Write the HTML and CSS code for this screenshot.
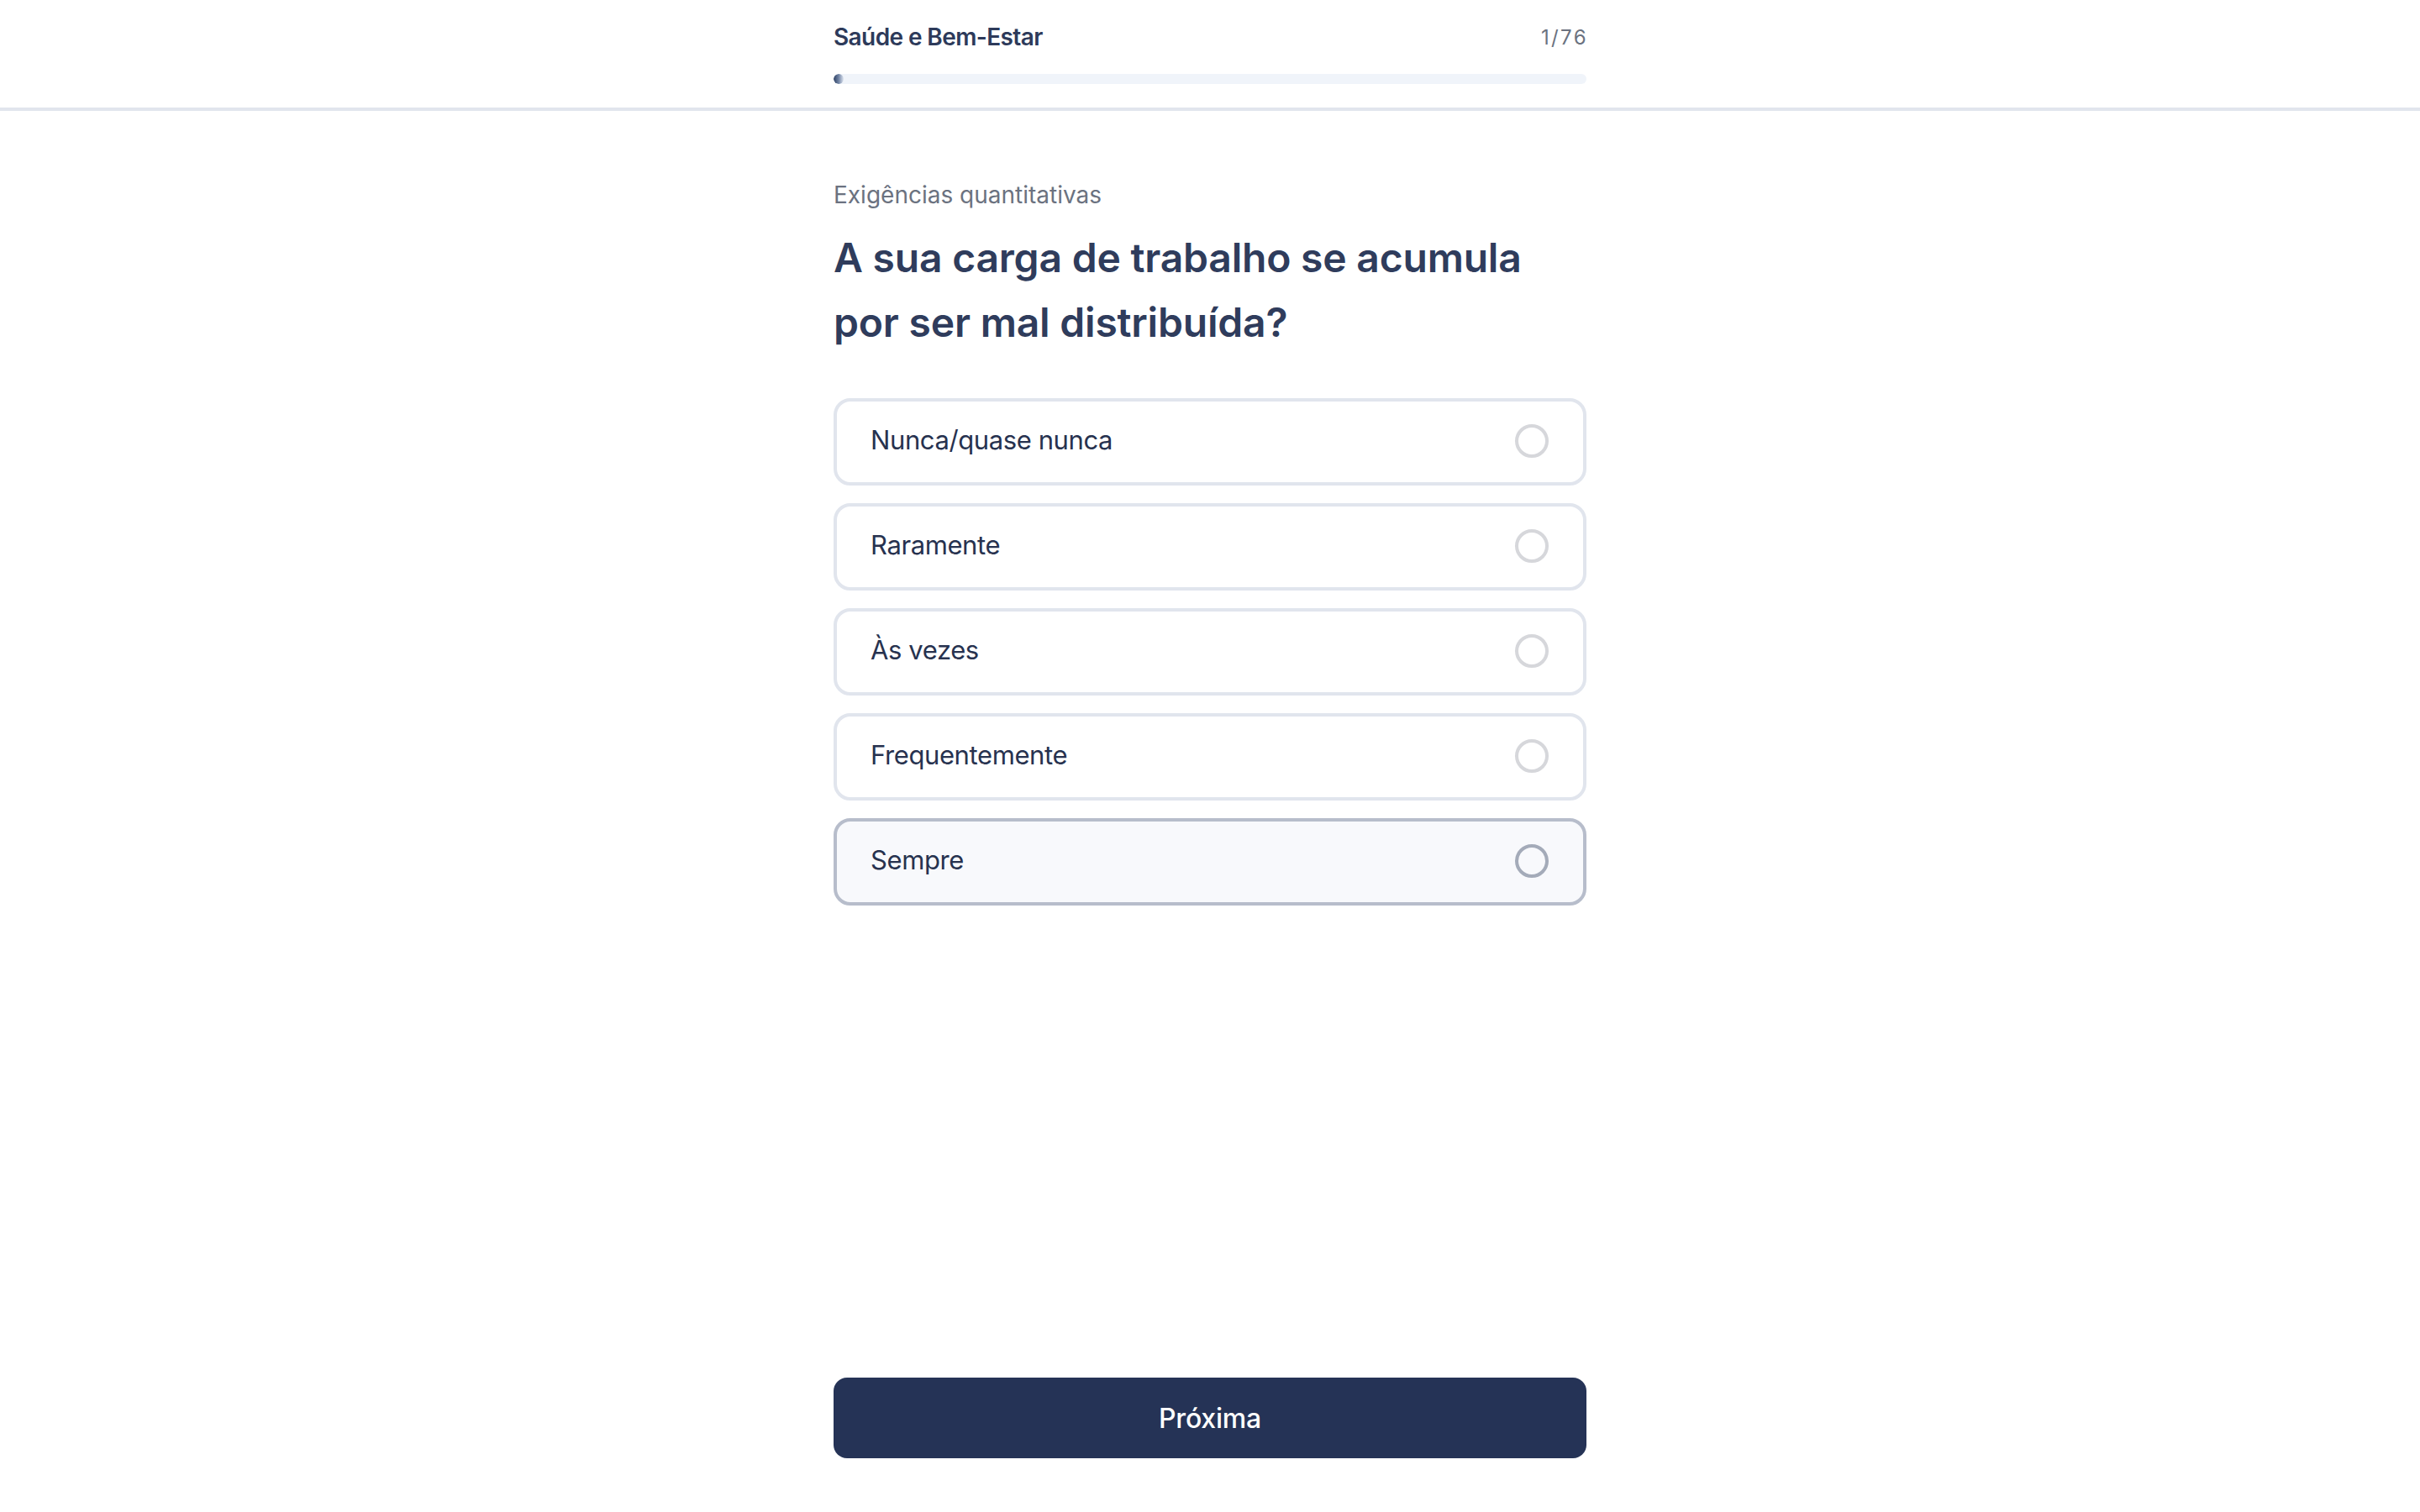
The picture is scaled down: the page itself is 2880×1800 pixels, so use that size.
FILE: index.html
```html
<!DOCTYPE html>
<html lang="pt-BR">
<head>
<meta charset="utf-8">
<title>Saúde e Bem-Estar</title>
<link rel="stylesheet" href="styles.css">
</head>
<body>
<header class="topbar">
  <div class="wrap">
    <div class="topbar-row">
      <span class="survey-title">Saúde e Bem-Estar</span>
      <span class="counter">1/76</span>
    </div>
    <div class="progress"><div class="progress-fill" style="width:1.32%"></div></div>
  </div>
</header>
<main class="main">
  <div class="wrap">
    <p class="category">Exigências quantitativas</p>
    <h1 class="question">A sua carga de trabalho se acumula por ser mal distribuída?</h1>
    <ul class="options">
      <li class="option"><span class="option-label">Nunca/quase nunca</span><span class="radio"></span></li>
      <li class="option"><span class="option-label">Raramente</span><span class="radio"></span></li>
      <li class="option"><span class="option-label">Às vezes</span><span class="radio"></span></li>
      <li class="option"><span class="option-label">Frequentemente</span><span class="radio"></span></li>
      <li class="option option-hover"><span class="option-label">Sempre</span><span class="radio"></span></li>
    </ul>
  </div>
</main>
<footer class="footer">
  <div class="wrap">
    <button class="next-btn" type="button">Próxima</button>
  </div>
</footer>
</body>
</html>
```

FILE: styles.css
```css
* { box-sizing: border-box; }
html, body { margin: 0; padding: 0; }
body {
  font-family: Inter, "Noto Sans", "Liberation Sans", sans-serif;
  background: #ffffff;
  color: #2e3b5b;
  min-height: 100vh;
  display: flex;
  flex-direction: column;
}
.wrap {
  width: 896px;
  margin: 0 auto;
}
.topbar {
  border-bottom: 4px solid #e1e5ed;
  padding: 24px 0 28px;
}
.topbar-row {
  display: flex;
  justify-content: space-between;
  align-items: center;
  height: 40px;
}
.survey-title {
  font-size: 28px;
  font-weight: 600;
  color: #2d3a5a;
  letter-spacing: -0.6px;
}
.counter {
  font-size: 24px;
  color: #6b7280;
  letter-spacing: 2.4px;
  margin-right: -2px;
}
.progress {
  margin-top: 24px;
  height: 12px;
  border-radius: 6px;
  background: #f0f4fa;
  overflow: hidden;
}
.progress-fill {
  height: 100%;
  border-radius: 6px;
  background: linear-gradient(90deg, #2f4264 0%, #6f82a3 50%, #dfe6f1 100%);
}
.main {
  flex: 1;
  padding-top: 80px;
}
.category {
  margin: 0 0 16px;
  font-size: 28px;
  line-height: 40px;
  color: #6b7280;
}
.question {
  max-width: 860px;
  margin: 0 0 52px;
  font-size: 48px;
  line-height: 77px;
  font-weight: 600;
  color: #2f3c5c;
  letter-spacing: -0.2px;
}
.options {
  list-style: none;
  margin: 0;
  padding: 0;
  display: flex;
  flex-direction: column;
  gap: 21px;
}
.option {
  height: 104px;
  border: 4px solid #e1e5ed;
  border-radius: 20px;
  background: #ffffff;
  padding: 0 40px;
  display: flex;
  align-items: center;
  justify-content: space-between;
}
.option-label {
  font-size: 31px;
  color: #27324f;
  letter-spacing: -0.4px;
  padding-bottom: 5px;
}
.radio {
  width: 40px;
  height: 40px;
  border: 4px solid #d6d7db;
  border-radius: 50%;
  margin-right: 1px;
  margin-bottom: 2px;
}
.option-hover {
  background: #f8f9fc;
  border-color: #b7bdcb;
}
.option-hover .radio {
  border-color: #a4abb9;
}
.footer {
  padding: 0 0 64px;
}
.next-btn {
  display: block;
  width: 100%;
  height: 96px;
  border: 0;
  border-radius: 16px;
  background: #253356;
  color: #ffffff;
  font-family: inherit;
  font-size: 32px;
  font-weight: 500;
  letter-spacing: -0.2px;
}
```
